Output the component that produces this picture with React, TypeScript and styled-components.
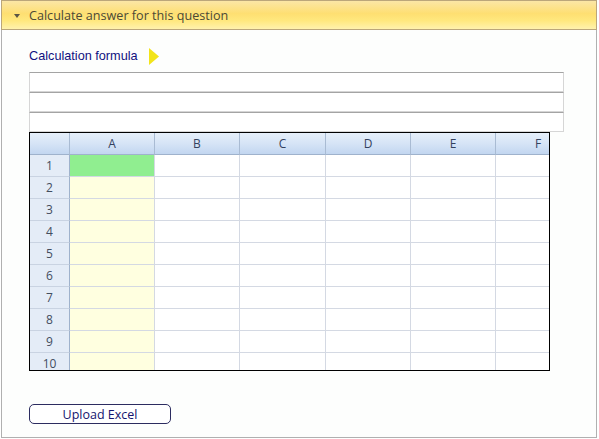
import React from "react";
import styled, { createGlobalStyle } from "styled-components";

const Global = createGlobalStyle`
  html, body { margin: 0; padding: 0; background: #ffffff; }
  body { font-family: "Open Sans", "DejaVu Sans", sans-serif; }
`;

const Panel = styled.div`
  margin: 0 0 0 1px;
  width: 596px;
  height: 438px;
  box-sizing: border-box;
  border: 1px solid #b0b0b0;
  border-top: none;
  background: #fdfefd;
  display: flex;
  flex-direction: column;
`;

const Header = styled.div`
  height: 30px;
  box-sizing: border-box;
  margin: 0 -1px;
  border: 1px solid #bba67a;
  background: linear-gradient(to bottom, #fbe6a6 0%, #fedf72 45%, #ffe87e 70%, #fff2ad 100%);
  display: flex;
  align-items: center;
  padding-left: 12px;
  gap: 9px;
  font-family: "Open Sans", sans-serif;
  font-size: 12.6px;
  color: #4c4836;
`;

const Caret = styled.span`
  width: 0;
  height: 0;
  border-left: 3.5px solid transparent;
  border-right: 3.5px solid transparent;
  border-top: 4px solid #5a5545;
  margin-top: 1px;
`;

const Body = styled.div`
  flex: 1;
  padding: 16px 0 0 27px;
  display: flex;
  flex-direction: column;
`;

const TitleRow = styled.div`
  display: flex;
  align-items: center;
  gap: 11px;
  height: 20px;
  margin-bottom: 6px;
`;

const Title = styled.span`
  font-family: "Liberation Sans", Arial, sans-serif;
  font-size: 12.7px;
  color: #101080;
`;

const FormulaBox = styled.div`
  width: 535px;
  height: 20px;
  box-sizing: border-box;
  border: 1px solid #d6d6d6;
  border-top: 1px solid #a4a4a4;
  background: #ffffff;
`;

const Sheet = styled.div`
  width: 521px;
  height: 239px;
  box-sizing: border-box;
  border: 1px solid #000000;
  overflow: hidden;
  background: #ffffff;
`;

const SheetGrid = styled.div`
  display: grid;
  grid-template-columns: 40px 85px 85px 86px 85px 85px 85px;
  grid-auto-rows: 22px;
  width: max-content;
`;

const ColHead = styled.div`
  background: linear-gradient(to bottom, #e6effa 0%, #d6e4f6 50%, #c2d6f0 100%);
  border-right: 1px solid #a9bbd3;
  border-bottom: 1px solid #9fb2cc;
  box-sizing: border-box;
  display: flex;
  align-items: center;
  justify-content: center;
  font-family: "Open Sans", sans-serif;
  font-size: 12px;
  color: #33415e;
`;

const RowHead = styled.div`
  background: #e4ecf7;
  border-right: 1px solid #9fb2cc;
  border-bottom: 1px solid #c9d3e2;
  box-sizing: border-box;
  display: flex;
  align-items: center;
  justify-content: center;
  font-family: "Open Sans", sans-serif;
  font-size: 12px;
  color: #434d5e;
`;

const Cell = styled.div<{ $bg: string }>`
  background: ${(p) => p.$bg};
  border-right: 1px solid #d4d9e3;
  border-bottom: 1px solid #d4d9e3;
  box-sizing: border-box;
`;

const Footer = styled.div`
  margin-top: 33px;
`;

const UploadButton = styled.button`
  width: 142px;
  height: 20px;
  box-sizing: border-box;
  border: 1px solid #2c2c60;
  border-radius: 5px;
  background: #ffffff;
  font-family: "Open Sans", sans-serif;
  font-size: 12.5px;
  color: #14146e;
  padding: 0;
  display: flex;
  align-items: center;
  justify-content: center;
  cursor: pointer;
`;

const cols = ["A", "B", "C", "D", "E", "F"];
const rows = Array.from({ length: 10 }, (_, i) => i + 1);

function cellBg(r: number, c: number) {
  if (c === 0 && r === 1) return "#90ee90";
  if (c === 0) return "#ffffe0";
  return "#ffffff";
}

export default function App() {
  return (
    <>
      <Global />
      <Panel>
        <Header>
          <Caret />
          <span>Calculate answer for this question</span>
        </Header>
        <Body>
          <TitleRow>
            <Title>Calculation formula</Title>
            <svg width="10" height="17" viewBox="0 0 10 17">
              <polygon points="0,0 10,8.5 0,17" fill="#f2e41a" />
            </svg>
          </TitleRow>
          <FormulaBox />
          <FormulaBox />
          <FormulaBox />
          <Sheet>
            <SheetGrid>
              <ColHead />
              {cols.map((c) => (
                <ColHead key={c}>{c}</ColHead>
              ))}
              {rows.map((r) => (
                <React.Fragment key={r}>
                  <RowHead>{r}</RowHead>
                  {cols.map((c, ci) => (
                    <Cell key={c} $bg={cellBg(r, ci)} />
                  ))}
                </React.Fragment>
              ))}
            </SheetGrid>
          </Sheet>
          <Footer>
            <UploadButton>Upload Excel</UploadButton>
          </Footer>
        </Body>
      </Panel>
    </>
  );
}
